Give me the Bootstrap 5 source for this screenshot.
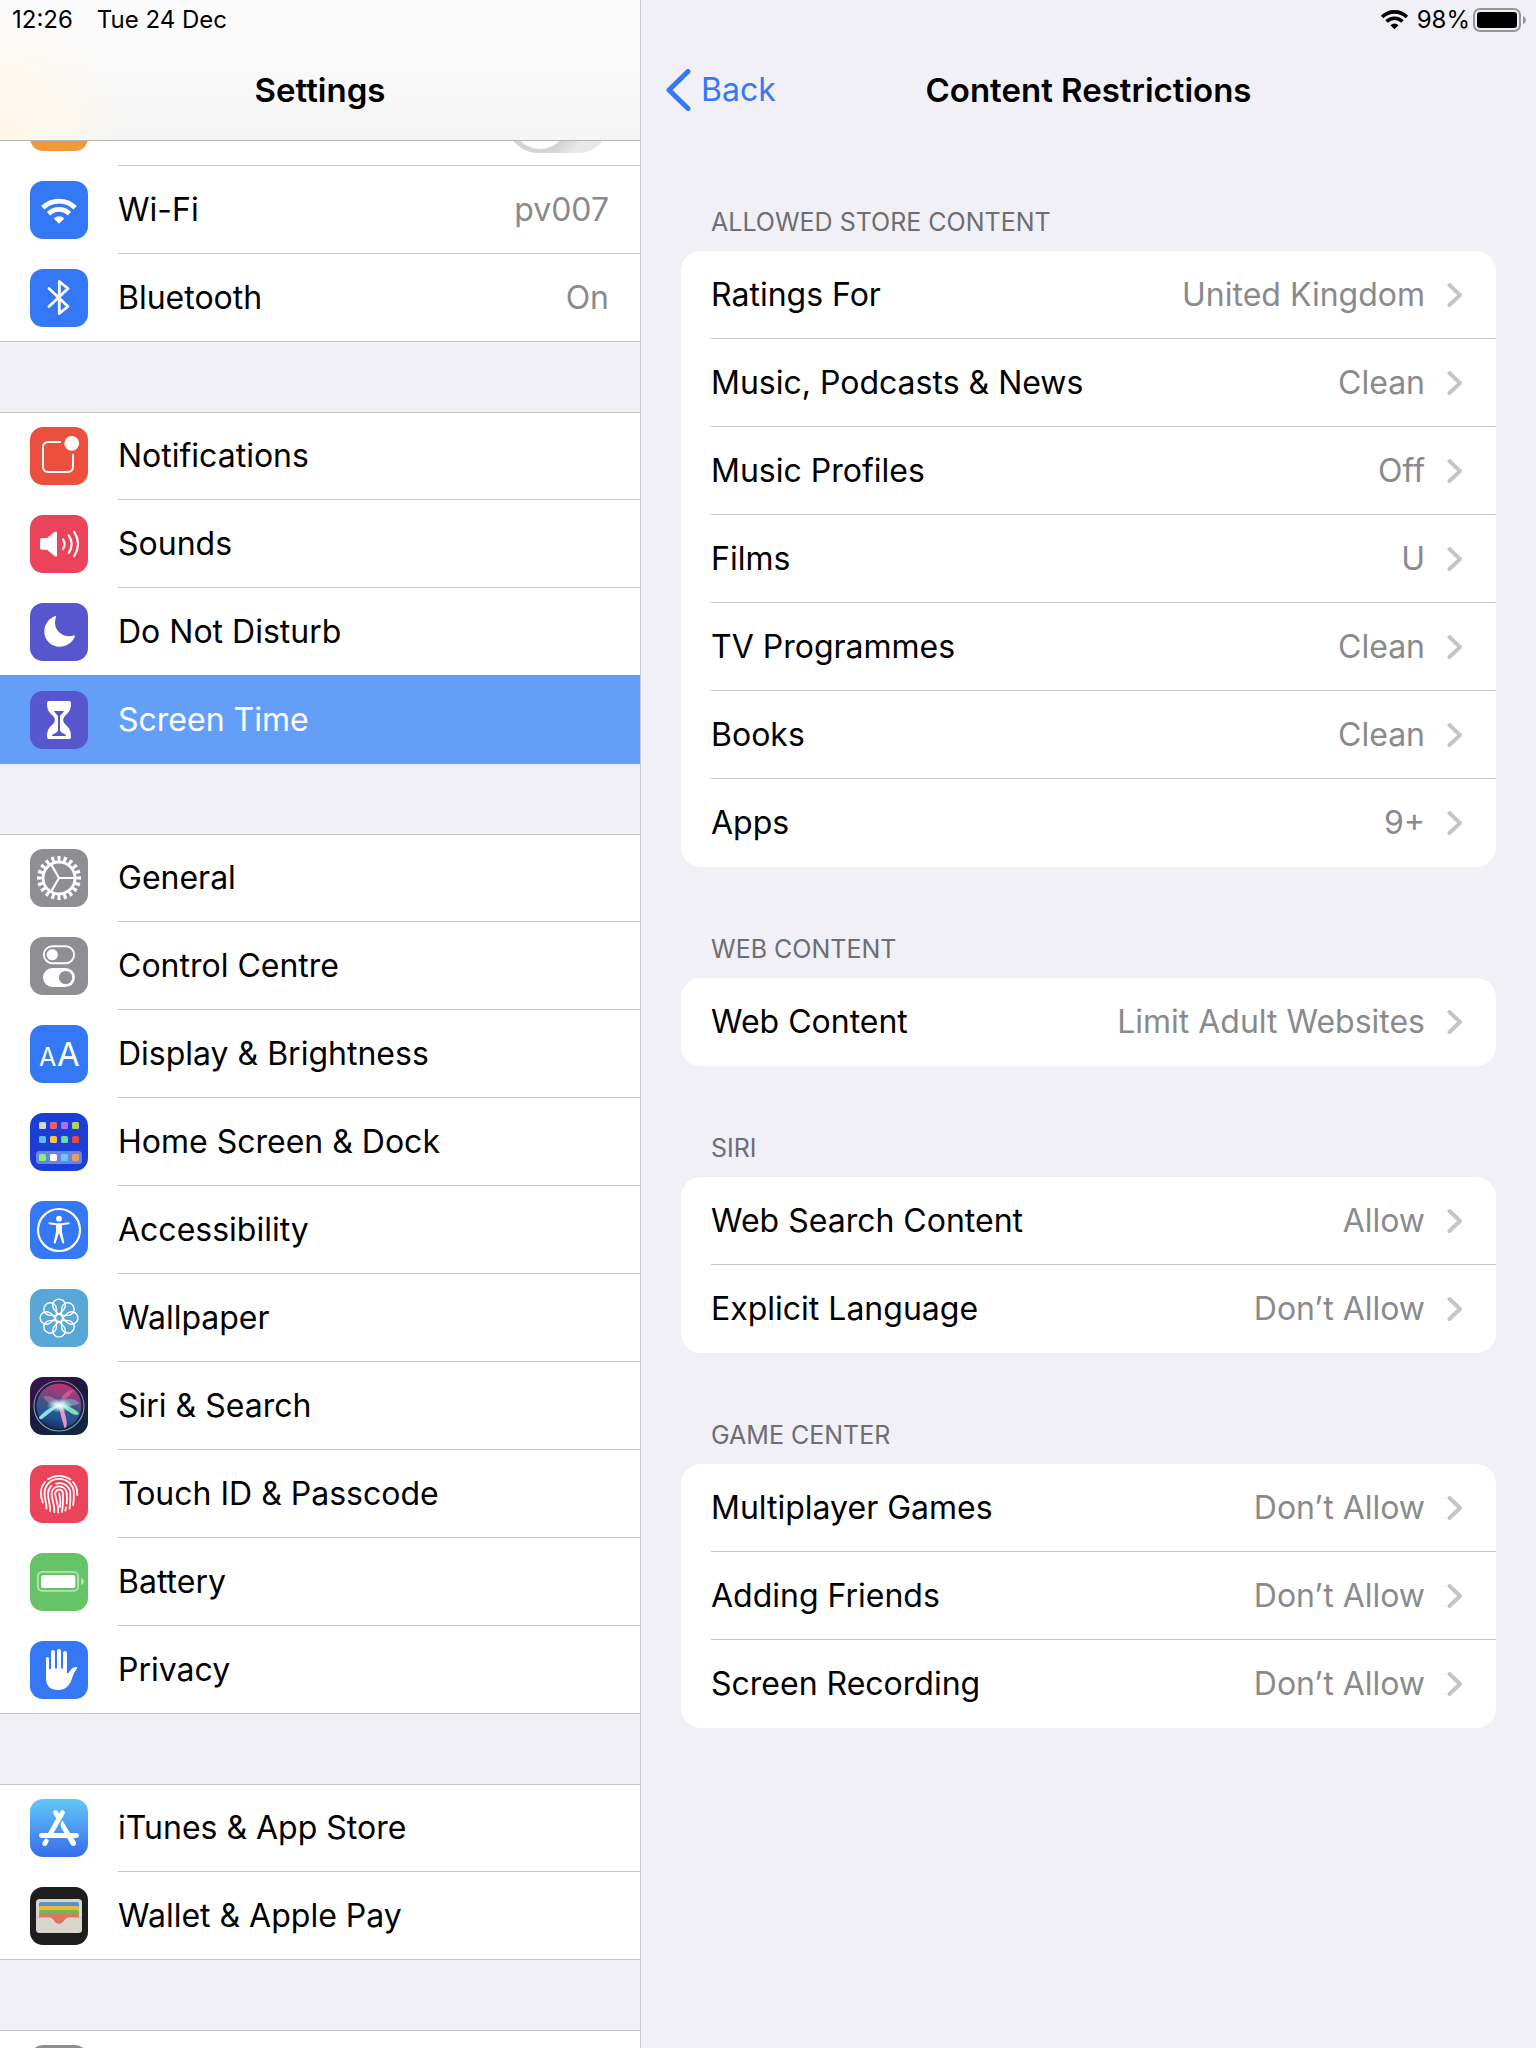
<!DOCTYPE html>
<html lang="en-GB">
<head>
<meta charset="utf-8">
<meta name="viewport" content="width=device-width, initial-scale=1">
<title>Settings – Content Restrictions</title>
<link href="https://cdn.jsdelivr.net/npm/bootstrap@5.3.0/dist/css/bootstrap.min.css" rel="stylesheet">
<style>
:root{--line:#c6c6c8;--page:#f1f0f6;--tint:#3478f6;--muted:#8a8a8d}
body{font-family:Inter,"Liberation Sans",sans-serif;font-size:32px;line-height:40px;color:#000;background:var(--page)}
a{text-decoration:none;color:inherit}
.shell{height:100vh;min-width:1100px}
.side{flex:0 0 641px;border-right:1px solid var(--line)}
.statusbar{height:40px;font-size:24px;line-height:30px;padding-top:5px}
.titlebar{height:100px}
.titlebar h1,.titlebar h2{font-size:33px;line-height:40px;font-weight:600;margin:0}
.side-head{border-bottom:1px solid #b4b4b6;background:radial-gradient(circle at 0 140px,#fff6e6 0,rgba(255,248,236,.7) 60px,rgba(255,250,244,0) 130px),linear-gradient(#fbfbfb 20%,#f5f5f5)}
.scrolled{margin-top:-63px}
.group{background:#fff;margin-bottom:70px;position:relative}
.group::before,.group::after{content:"";position:absolute;left:0;right:0;height:1px;background:var(--line)}
.group::before{top:0}
.group::after{bottom:0}
.group.ends-selected::after{display:none}
.entry{height:88px;padding-left:30px;gap:30px}
.entry>svg{width:58px;height:58px;flex:none;border-radius:13px}
.entry-text{padding-right:31px;border-bottom:1px solid var(--line)}
.entry:last-child .entry-text,.entry.before-selected .entry-text{border-bottom-color:transparent}
.entry.selected{background:#639ff8;color:#fff;box-shadow:0 -1px #639ff8;z-index:1}
.value{color:var(--muted)}
.toggle{appearance:none;width:102px;height:62px;margin:0;border-radius:31px;background:radial-gradient(circle at 33px 31px,#fff 26px,#d2d2d4 28px,#e9e9eb 46px)}
.back{color:var(--tint);left:25px;gap:10px}
.main-scroll{padding:44px 40px 0}
.caption{font-size:25px;line-height:32px;color:#6d6d72;margin:66px 0 13px;padding-left:30px;font-weight:400}
.caption.first{margin-top:22px}
.panel{background:#fff;border-radius:20px}
.option{height:88px;padding-left:30px}
.option-text{border-bottom:1px solid var(--line);padding-right:33px;gap:22px}
.option:last-child .option-text{border-bottom-color:transparent}
.chev{width:16px;height:26px;flex:none;fill:none;stroke:#c5c5c7;stroke-width:4;stroke-linecap:round;stroke-linejoin:round}
</style>
</head>
<body>
<svg width="0" height="0" class="position-absolute" aria-hidden="true">
  <defs>
    <symbol id="chevron" viewBox="0 0 16 26"><path d="M2.500 3 L13 13 L2.500 23"/></symbol>
    <symbol id="wifi" viewBox="0 0 38 26">
      <path d="M2.800 9.800 A22.800 22.800 0 0 1 35.200 9.800" fill="none" stroke="currentColor" stroke-width="4.800"/>
      <path d="M8.600 15.700 A14.700 14.700 0 0 1 29.400 15.700" fill="none" stroke="currentColor" stroke-width="4.800"/>
      <path d="M13.700 20.400 A7.800 7.800 0 0 1 24.300 20.400 L19 25.800Z" fill="currentColor"/>
    </symbol>
    <linearGradient id="storeFill" x1="0" y1="0" x2="0" y2="1"><stop offset="0" stop-color="#62c8f8"/><stop offset="1" stop-color="#376ceb"/></linearGradient>
    <linearGradient id="siriBack" x1="0" y1="0" x2=".6" y2="1"><stop offset="0" stop-color="#41104f"/><stop offset=".5" stop-color="#1c1a3c"/><stop offset="1" stop-color="#12263f"/></linearGradient>
    <linearGradient id="siriOrb" x1=".6" y1="0" x2=".35" y2="1"><stop offset="0" stop-color="#c82f70"/><stop offset=".25" stop-color="#8b3f80"/><stop offset=".5" stop-color="#3f5580"/><stop offset=".75" stop-color="#1f5596"/><stop offset="1" stop-color="#1b2c5c"/></linearGradient>
    <linearGradient id="siriRim" x1="0" y1="0" x2="0" y2="1"><stop offset="0" stop-color="#a0709c"/><stop offset="1" stop-color="#6fb0b8"/></linearGradient>
    <radialGradient id="siriGlow"><stop offset="0" stop-color="#fff"/><stop offset=".4" stop-color="#d6f8f8" stop-opacity=".85"/><stop offset="1" stop-color="#8fe" stop-opacity="0"/></radialGradient>
  </defs>
</svg>

<div class="shell d-flex overflow-hidden">
  <aside class="side d-flex flex-column overflow-hidden">
    <header class="side-head flex-shrink-0 position-relative z-2">
      <div class="statusbar d-flex px-2"><span class="ps-1">12:26</span><span class="ms-4">Tue 24 Dec</span></div>
      <div class="titlebar d-flex align-items-center justify-content-center"><h1>Settings</h1></div>
    </header>
    <nav class="flex-grow-1 overflow-hidden" aria-label="Settings">
      <div class="scrolled">
        <div class="group">
          <div class="entry d-flex align-items-center">
            <svg viewBox="0 0 58 58"><rect width="58" height="58" fill="#f09a37"/></svg>
            <div class="entry-text d-flex align-items-center justify-content-end flex-grow-1 h-100"><input class="toggle" type="checkbox" role="switch" aria-label="Aeroplane Mode"></div>
          </div>
          <a href="#" class="entry d-flex align-items-center">
            <svg viewBox="0 0 58 58"><rect width="58" height="58" fill="#3478f6"/><use href="#wifi" x="10" y="17" width="38" height="26" color="#fff"/></svg>
            <span class="entry-text d-flex align-items-center justify-content-between flex-grow-1 h-100"><span>Wi-Fi</span><span class="value">pv007</span></span>
          </a>
          <a href="#" class="entry d-flex align-items-center">
            <svg viewBox="0 0 58 58"><rect width="58" height="58" fill="#3478f6"/><path d="M19 19.500 L38 37.500 L29.300 44.500 V12.500 L38 19.500 L19 37.500" fill="none" stroke="#fff" stroke-width="2.800" stroke-linecap="round" stroke-linejoin="round"/></svg>
            <span class="entry-text d-flex align-items-center justify-content-between flex-grow-1 h-100"><span>Bluetooth</span><span class="value">On</span></span>
          </a>
        </div>

        <div class="group ends-selected">
          <a href="#" class="entry d-flex align-items-center">
            <svg viewBox="0 0 58 58"><rect width="58" height="58" fill="#eb4f3d"/><path d="M31 15 H18.500 Q13 15 13 20.500 V39.500 Q13 45 18.500 45 H37.500 Q43 45 43 39.500 V27" fill="none" stroke="#fff" stroke-width="1.900"/><circle cx="41.700" cy="16.300" r="7.400" fill="#fff"/></svg>
            <span class="entry-text d-flex align-items-center flex-grow-1 h-100">Notifications</span>
          </a>
          <a href="#" class="entry d-flex align-items-center">
            <svg viewBox="0 0 58 58"><rect width="58" height="58" fill="#eb445a"/><path d="M12 23 H17 L24.500 17 Q27 15.500 27 18 V40.300 Q27 42.700 24.500 41 L17 34.700 H12 Q10 34.700 10 32.700 V25 Q10 23 12 23Z" fill="#fff"/><path d="M33 24.500 Q36.200 29 33 33.800 M38.800 20.500 Q44.500 29 38.800 37.800 M44.300 17 Q51.800 29 44.300 41" fill="none" stroke="#fff" stroke-width="2.200" stroke-linecap="round"/></svg>
            <span class="entry-text d-flex align-items-center flex-grow-1 h-100">Sounds</span>
          </a>
          <a href="#" class="entry before-selected d-flex align-items-center">
            <svg viewBox="0 0 58 58"><rect width="58" height="58" fill="#5856ce"/><path d="M24.800 13.300 C26 12.700 26.300 13.200 26 14.300 C22 25 31 36 43.800 32.500 C45 32.200 45.300 32.800 44.800 33.800 C42 40 36 43.800 29.800 43.800 C21 43.800 14.300 37 14.300 28.500 C14.300 21.500 18.500 15.800 24.800 13.300Z" fill="#fff"/></svg>
            <span class="entry-text d-flex align-items-center flex-grow-1 h-100">Do Not Disturb</span>
          </a>
          <a href="#" class="entry selected position-relative d-flex align-items-center" aria-current="page">
            <svg viewBox="0 0 58 58"><rect width="58" height="58" fill="#5856ce"/><path d="M19 10 H39 Q41 10 41 12 C41 20 38.500 21.500 34.500 25.500 Q31.800 29 34.500 32.500 C38.500 36.500 41 38 41 46 Q41 48 39 48 H19 Q17 48 17 46 C17 38 19.500 36.500 23.500 32.500 Q26.200 29 23.500 25.500 C19.500 21.500 17 20 17 12 Q17 10 19 10Z" fill="#fff"/><path d="M24 20 H34 C33 22.500 30 23.500 30 26 V39.500 Q30.500 41.500 35.800 43.700 V45 H22.200 V43.700 Q27.500 41.500 28 39.500 V26 C28 23.500 25 22.500 24 20Z" fill="#5856ce"/></svg>
            <span class="entry-text d-flex align-items-center flex-grow-1 h-100">Screen Time</span>
          </a>
        </div>

        <div class="group">
          <a href="#" class="entry d-flex align-items-center">
            <svg viewBox="0 0 58 58"><rect width="58" height="58" fill="#8e8e93"/><g fill="none" stroke="#fff"><circle cx="29" cy="29" r="16" stroke-width="2.800"/><circle cx="29" cy="29" r="19.400" stroke-width="5.200" pathLength="80" stroke-dasharray="2 2" stroke-dashoffset="1"/><path d="M29 29 H44 M29 29 L21.500 16 M29 29 L21.500 42" stroke-width="2.200"/></g></svg>
            <span class="entry-text d-flex align-items-center flex-grow-1 h-100">General</span>
          </a>
          <a href="#" class="entry d-flex align-items-center">
            <svg viewBox="0 0 58 58"><rect width="58" height="58" fill="#8e8e93"/><rect x="13.900" y="9.200" width="30.200" height="17" rx="8.500" fill="none" stroke="#fff" stroke-width="1.900"/><circle cx="22.300" cy="17.700" r="5.600" fill="#fff"/><rect x="13" y="31" width="32" height="19" rx="9.500" fill="#fff"/><circle cx="35.600" cy="40.500" r="6.600" fill="#8e8e93"/></svg>
            <span class="entry-text d-flex align-items-center flex-grow-1 h-100">Control Centre</span>
          </a>
          <a href="#" class="entry d-flex align-items-center">
            <svg viewBox="0 0 58 58"><rect width="58" height="58" fill="#3478f6"/><g fill="#fff" font-family="Inter,sans-serif"><text x="9" y="41" font-size="25">A</text><text x="27" y="41" font-size="33">A</text></g></svg>
            <span class="entry-text d-flex align-items-center flex-grow-1 h-100">Display &amp; Brightness</span>
          </a>
          <a href="#" class="entry d-flex align-items-center">
            <svg viewBox="0 0 58 58"><rect width="58" height="58" fill="#1b3fd6"/><rect x="6" y="38" width="46" height="13" rx="3.500" fill="#6a84e0"/>
              <g><rect x="9" y="9" width="7" height="7" rx="1.500" fill="#d5d5d5"/><rect x="20" y="9" width="7" height="7" rx="1.500" fill="#ea5e6b"/><rect x="31" y="9" width="7" height="7" rx="1.500" fill="#b06ef3"/><rect x="42" y="9" width="7" height="7" rx="1.500" fill="#b9cf52"/>
              <rect x="9" y="23" width="7" height="7" rx="1.500" fill="#5fb8f8"/><rect x="20" y="23" width="7" height="7" rx="1.500" fill="#f5c244"/><rect x="31" y="23" width="7" height="7" rx="1.500" fill="#74d6a5"/><rect x="42" y="23" width="7" height="7" rx="1.500" fill="#e54a3a"/>
              <rect x="9" y="41" width="7" height="7" rx="1.500" fill="#86ee82"/><rect x="20" y="41" width="7" height="7" rx="1.500" fill="#fff"/><rect x="31" y="41" width="7" height="7" rx="1.500" fill="#66cbf9"/><rect x="42" y="41" width="7" height="7" rx="1.500" fill="#ee9e58"/></g></svg>
            <span class="entry-text d-flex align-items-center flex-grow-1 h-100">Home Screen &amp; Dock</span>
          </a>
          <a href="#" class="entry d-flex align-items-center">
            <svg viewBox="0 0 58 58"><rect width="58" height="58" fill="#3478f6"/><circle cx="29" cy="29" r="21" fill="none" stroke="#fff" stroke-width="2.200"/><circle cx="29" cy="17.700" r="2.900" fill="#fff"/><path d="M19 21.300 L26.500 22.300 H31.500 L39 21.300 Q40.500 22.300 39 23.200 L32 24.300 V31 L34.300 41.500 Q33.500 43.500 32.300 42 L29.300 32.500 H28.700 L25.700 42 Q24.500 43.500 23.700 41.500 L26 31 V24.300 L19 23.200 Q17.500 22.300 19 21.300Z" fill="#fff"/></svg>
            <span class="entry-text d-flex align-items-center flex-grow-1 h-100">Accessibility</span>
          </a>
          <a href="#" class="entry d-flex align-items-center">
            <svg viewBox="0 0 58 58"><rect width="58" height="58" fill="#59a7d7"/><g fill="none" stroke="#fff" stroke-width="1.400"><circle cx="29" cy="29" r="3.600"/>
              <path id="petal" d="M29 25.400 L24.200 20.500 A6.300 6.300 0 1 1 33.800 20.500Z"/><use href="#petal" transform="rotate(45 29 29)"/><use href="#petal" transform="rotate(90 29 29)"/><use href="#petal" transform="rotate(135 29 29)"/><use href="#petal" transform="rotate(180 29 29)"/><use href="#petal" transform="rotate(225 29 29)"/><use href="#petal" transform="rotate(270 29 29)"/><use href="#petal" transform="rotate(315 29 29)"/></g></svg>
            <span class="entry-text d-flex align-items-center flex-grow-1 h-100">Wallpaper</span>
          </a>
          <a href="#" class="entry d-flex align-items-center">
            <svg viewBox="0 0 58 58"><rect width="58" height="58" fill="url(#siriBack)"/><circle cx="29" cy="29" r="25" fill="#1b2142" stroke="url(#siriRim)" stroke-width="1.200"/><circle cx="29" cy="29" r="22.500" fill="url(#siriOrb)"/>
              <path d="M13 20 Q22 16 31 28 Q20 30 13 20Z" fill="#d593c4" opacity=".45"/><path d="M31 28 Q30 14 44 13 Q40 18 31 28Z" fill="#f07ab0" opacity=".5"/><path d="M30 27 Q38 17 50 26 Q42 30 30 29Z" fill="#7fb8c8" opacity=".6"/><path d="M9 40 Q18 30 31 27 Q22 34 12 42 Q9 43 9 40Z" fill="#8ff5f0" opacity=".9"/><path d="M28.500 28 Q31 40 34.500 51 Q37.500 51 36.500 44 Q35 34 31 27Z" fill="#f59acb" opacity=".95"/><path d="M31 27 Q40 29 48 35 Q50 39 44 37.500 Q36 34 31 27Z" fill="#7ff2c8" opacity=".9"/><ellipse cx="29.500" cy="28.500" rx="13" ry="7" fill="url(#siriGlow)"/></svg>
            <span class="entry-text d-flex align-items-center flex-grow-1 h-100">Siri &amp; Search</span>
          </a>
          <a href="#" class="entry d-flex align-items-center">
            <svg viewBox="0 0 58 58"><rect width="58" height="58" fill="#eb445a"/><g fill="none" stroke="#fff" stroke-width="1.800" stroke-linecap="round"><path d="M18 14.300 Q29 7.500 40.500 14.500"/><path d="M12.800 37.500 C9.500 29 11 21.500 15 17"/><path d="M43 17 Q47.500 22 47.300 30"/><path d="M16.500 43.500 C17 38 14.300 35 14.500 28 C15.500 9 43 9.500 43.800 28 Q44 34 43.200 40"/><path d="M20.200 46 C20.500 38 17.800 35 18 28.500 Q18.300 23.500 21.500 20.800"/><path d="M26 18.600 C33 16.700 40 21 40.300 28.500 Q40.700 37 39.500 43.500"/><path d="M24.300 47 C24.800 38 21.300 34 21.600 28.500 C22.300 19 36 19 36.700 28.500 Q37.200 35 36.700 38.500"/><path d="M36 42.500 L35.300 45.500"/><path d="M28.200 47.500 C28.700 38 25 33 25.200 28.500 C25.800 23.500 32.600 23.500 33 28.500 Q33.600 39 32 47"/><path d="M29.200 28.500 Q31 37 30 42"/></g></svg>
            <span class="entry-text d-flex align-items-center flex-grow-1 h-100">Touch ID &amp; Passcode</span>
          </a>
          <a href="#" class="entry d-flex align-items-center">
            <svg viewBox="0 0 58 58"><rect width="58" height="58" fill="#67c466"/><rect x="7.900" y="18.900" width="40.200" height="19" rx="4.500" fill="none" stroke="#b5e2b5" stroke-width="1.900"/><rect x="11" y="22" width="34.300" height="13" rx="2.500" fill="#fff"/><path d="M51 25 Q54 26 54 28.500 Q54 31 51 32Z" fill="#b5e2b5"/></svg>
            <span class="entry-text d-flex align-items-center flex-grow-1 h-100">Battery</span>
          </a>
          <a href="#" class="entry d-flex align-items-center">
            <svg viewBox="0 0 58 58"><rect width="58" height="58" fill="#3478f6"/><path d="M16 17.500 Q16 16 17.500 16 Q19 16 19 17.500 V28 H21 V11 Q21 9 23 9 Q25 9 25 11 V27.500 H27 V10 Q27 8 29 8 Q31 8 31 10 V27.500 H33 V12 Q33 10 35 10 Q37 10 37 12 V32.500 Q38.500 32 40 30 Q42.500 26 46 26 Q48 26.300 47 27.700 Q44.500 30 42.500 36 Q39 49 28 49 Q16 49 16 36.500Z" fill="#fff"/></svg>
            <span class="entry-text d-flex align-items-center flex-grow-1 h-100">Privacy</span>
          </a>
        </div>

        <div class="group">
          <a href="#" class="entry d-flex align-items-center">
            <svg viewBox="0 0 58 58"><rect width="58" height="58" fill="url(#storeFill)"/><g fill="none" stroke="#fff" stroke-width="4.800" stroke-linecap="round"><path d="M11.500 36.500 H46.500"/><path d="M32.500 13.500 L20.500 34.500"/><path d="M25.500 13.500 L28 17.500"/><path d="M16.300 42 L14.700 44.700"/></g><path d="M32.300 21.500 Q34 24 36 27.500 L45.800 43 Q46.500 46 44 47 Q41.800 47.500 40.500 45 L31.800 29.500 Q29.500 25.500 32.300 21.500Z" fill="#fff"/></svg>
            <span class="entry-text d-flex align-items-center flex-grow-1 h-100">iTunes &amp; App Store</span>
          </a>
          <a href="#" class="entry d-flex align-items-center">
            <svg viewBox="0 0 58 58"><rect width="58" height="58" fill="#1e1e1e"/><rect x="6" y="12" width="46" height="34" rx="3.500" fill="#d9d6cc"/><path d="M9 20 V17 Q9 15 11 15 H47 Q49 15 49 17 V20Z" fill="#5496c6"/><path d="M9 24 V21 Q9 19 11 19 H47 Q49 19 49 21 V24Z" fill="#f2b23e"/><path d="M9 28 V25 Q9 23 11 23 H47 Q49 23 49 25 V28Z" fill="#6cbb4e"/><path d="M9 30.500 V29 Q9 27 11 27 H47 Q49 27 49 29 V30.500 H38 Q36 30.500 34.500 33 Q32.500 36.700 29 36.700 Q25.500 36.700 23.500 33 Q22 30.500 20 30.500Z" fill="#e07464"/><path d="M6 30.500 H20 M38 30.500 H52" stroke="#bdbab0" stroke-width=".8"/></svg>
            <span class="entry-text d-flex align-items-center flex-grow-1 h-100">Wallet &amp; Apple Pay</span>
          </a>
        </div>

        <div class="group">
          <div class="entry d-flex align-items-center">
            <svg viewBox="0 0 58 58"><rect width="58" height="58" fill="#8e8e93"/></svg>
          </div>
        </div>
      </div>
    </nav>
  </aside>

  <main class="flex-grow-1 d-flex flex-column">
    <header>
      <div class="statusbar d-flex justify-content-end pe-2">
        <svg class="mt-1 me-2" width="29" height="21" viewBox="0 0 38 26"><use href="#wifi" width="38" height="26"/></svg>
        <span>98%</span>
        <svg width="58" height="30" viewBox="0 0 58 30"><rect x="4" y="4" width="46" height="22" rx="6" fill="none" stroke="#97979b" stroke-width="2"/><rect x="7" y="7" width="40" height="16" rx="3" fill="#000"/><path d="M53 11 Q56 12 56 15 Q56 18 53 19Z" fill="#97979b"/></svg>
      </div>
      <div class="titlebar position-relative d-flex align-items-center justify-content-center">
        <a href="#" class="back position-absolute d-flex align-items-center"><svg width="25" height="42" viewBox="0 0 25 42"><path d="M22 2.500 L3 21 L22 39.500" fill="none" stroke="currentColor" stroke-width="5" stroke-linecap="round" stroke-linejoin="round"/></svg>Back</a>
        <h2>Content Restrictions</h2>
      </div>
    </header>
    <div class="main-scroll">
      <h3 class="caption first">ALLOWED STORE CONTENT</h3>
      <div class="panel">
        <a href="#" class="option d-flex"><span class="option-text d-flex align-items-center flex-grow-1"><span>Ratings For</span><span class="value ms-auto">United Kingdom</span><svg class="chev"><use href="#chevron"/></svg></span></a>
        <a href="#" class="option d-flex"><span class="option-text d-flex align-items-center flex-grow-1"><span>Music, Podcasts &amp; News</span><span class="value ms-auto">Clean</span><svg class="chev"><use href="#chevron"/></svg></span></a>
        <a href="#" class="option d-flex"><span class="option-text d-flex align-items-center flex-grow-1"><span>Music Profiles</span><span class="value ms-auto">Off</span><svg class="chev"><use href="#chevron"/></svg></span></a>
        <a href="#" class="option d-flex"><span class="option-text d-flex align-items-center flex-grow-1"><span>Films</span><span class="value ms-auto">U</span><svg class="chev"><use href="#chevron"/></svg></span></a>
        <a href="#" class="option d-flex"><span class="option-text d-flex align-items-center flex-grow-1"><span>TV Programmes</span><span class="value ms-auto">Clean</span><svg class="chev"><use href="#chevron"/></svg></span></a>
        <a href="#" class="option d-flex"><span class="option-text d-flex align-items-center flex-grow-1"><span>Books</span><span class="value ms-auto">Clean</span><svg class="chev"><use href="#chevron"/></svg></span></a>
        <a href="#" class="option d-flex"><span class="option-text d-flex align-items-center flex-grow-1"><span>Apps</span><span class="value ms-auto">9+</span><svg class="chev"><use href="#chevron"/></svg></span></a>
      </div>
      <h3 class="caption">WEB CONTENT</h3>
      <div class="panel">
        <a href="#" class="option d-flex"><span class="option-text d-flex align-items-center flex-grow-1"><span>Web Content</span><span class="value ms-auto">Limit Adult Websites</span><svg class="chev"><use href="#chevron"/></svg></span></a>
      </div>
      <h3 class="caption">SIRI</h3>
      <div class="panel">
        <a href="#" class="option d-flex"><span class="option-text d-flex align-items-center flex-grow-1"><span>Web Search Content</span><span class="value ms-auto">Allow</span><svg class="chev"><use href="#chevron"/></svg></span></a>
        <a href="#" class="option d-flex"><span class="option-text d-flex align-items-center flex-grow-1"><span>Explicit Language</span><span class="value ms-auto">Don’t Allow</span><svg class="chev"><use href="#chevron"/></svg></span></a>
      </div>
      <h3 class="caption">GAME CENTER</h3>
      <div class="panel">
        <a href="#" class="option d-flex"><span class="option-text d-flex align-items-center flex-grow-1"><span>Multiplayer Games</span><span class="value ms-auto">Don’t Allow</span><svg class="chev"><use href="#chevron"/></svg></span></a>
        <a href="#" class="option d-flex"><span class="option-text d-flex align-items-center flex-grow-1"><span>Adding Friends</span><span class="value ms-auto">Don’t Allow</span><svg class="chev"><use href="#chevron"/></svg></span></a>
        <a href="#" class="option d-flex"><span class="option-text d-flex align-items-center flex-grow-1"><span>Screen Recording</span><span class="value ms-auto">Don’t Allow</span><svg class="chev"><use href="#chevron"/></svg></span></a>
      </div>
    </div>
  </main>
</div>
<script src="https://cdn.jsdelivr.net/npm/bootstrap@5.3.0/dist/js/bootstrap.bundle.min.js"></script>
</body>
</html>
